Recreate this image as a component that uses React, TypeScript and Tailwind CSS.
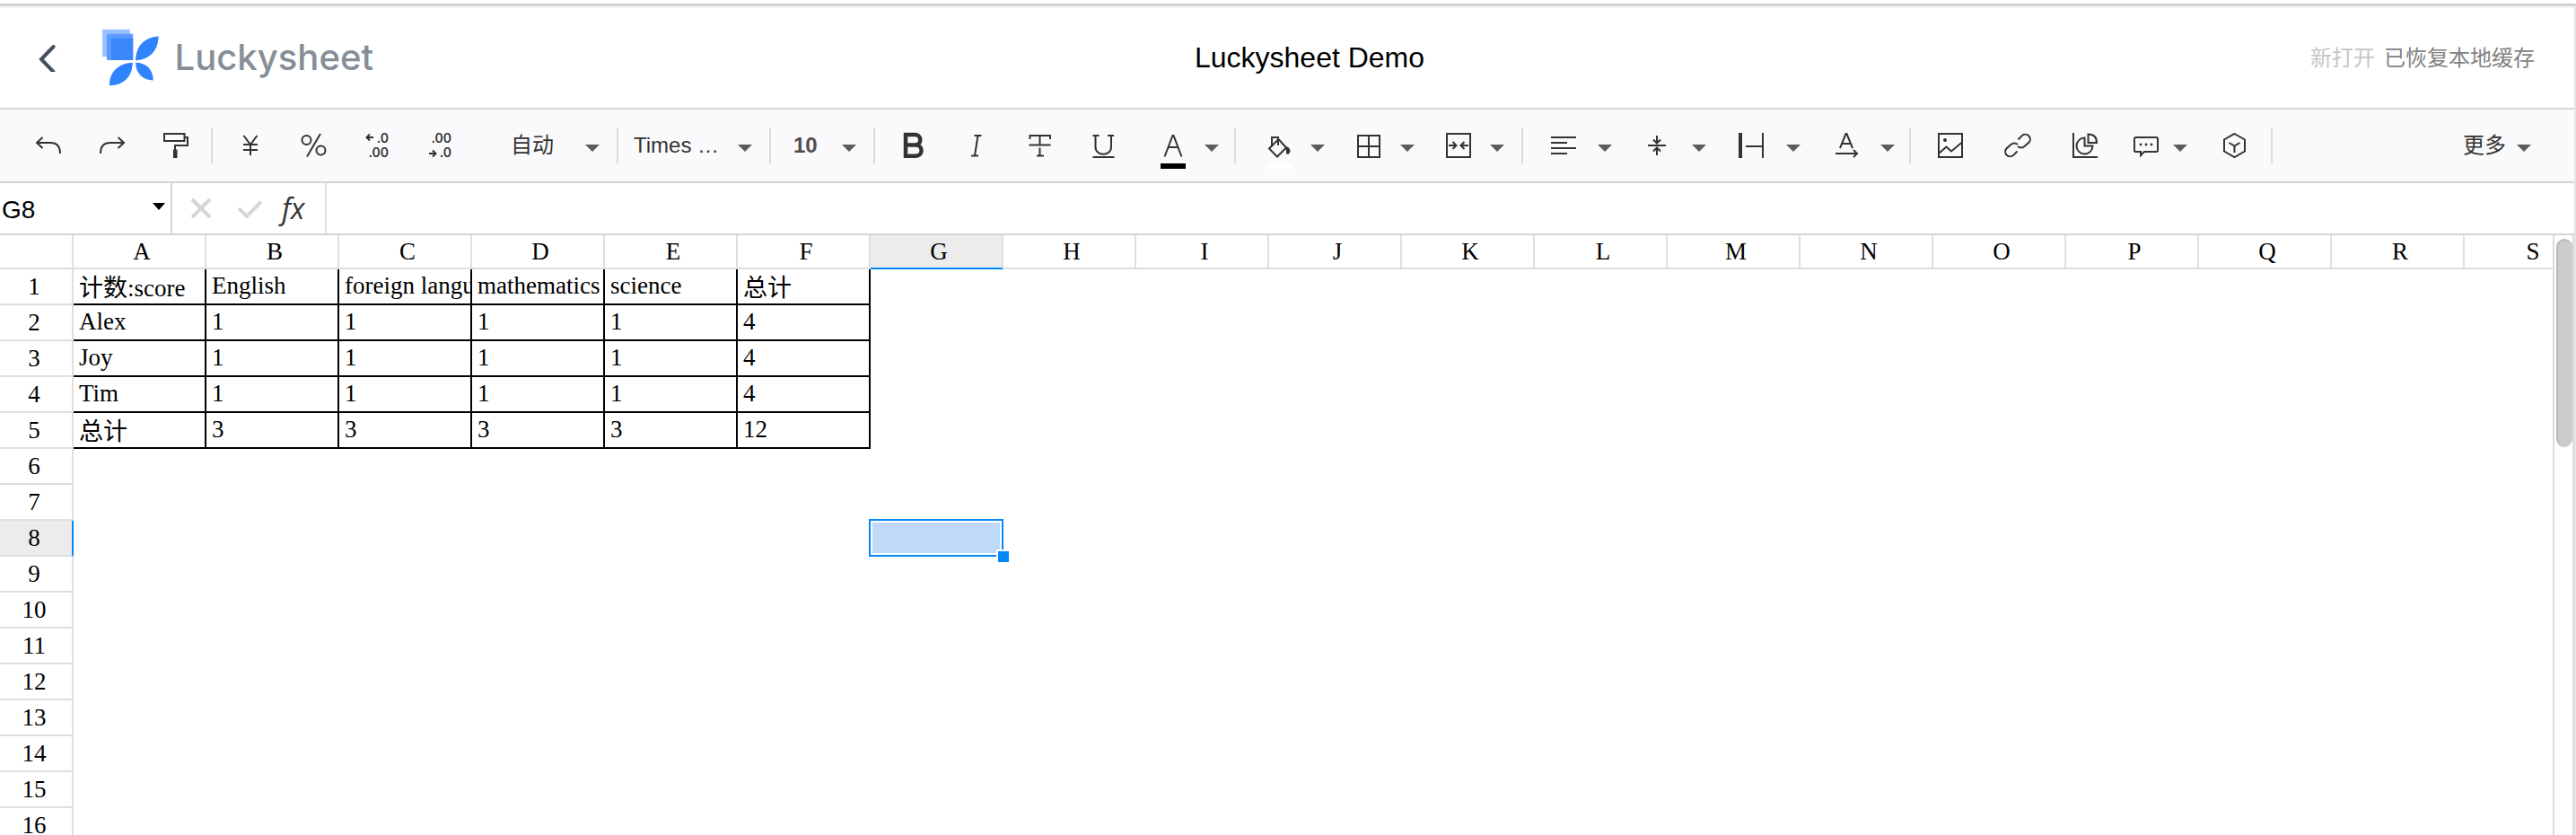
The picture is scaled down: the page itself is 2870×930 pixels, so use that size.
import type { ReactNode } from "react";
import clsx from "clsx";

const columns = "ABCDEFGHIJKLMNOPQRS".split("");
const rowCount = 16;
const active = { col: "G", row: 8 };

const cells = [
  ["计数:score", "English", "foreign language", "mathematics", "science", "总计"],
  ["Alex", "1", "1", "1", "1", "4"],
  ["Joy", "1", "1", "1", "1", "4"],
  ["Tim", "1", "1", "1", "1", "4"],
  ["总计", "3", "3", "3", "3", "12"],
];

const hasHan = (text: string) => /[\u4e00-\u9fff]/.test(text);

const Icon = ({ children, width = 2 }: { children: ReactNode; width?: number }) => (
  <svg
    viewBox="0 0 28 28"
    className="size-7 shrink-0 overflow-visible"
    fill="none"
    stroke="#333"
    strokeWidth={width}
    aria-hidden="true"
  >
    {children}
  </svg>
);

const Caret = () => (
  <svg viewBox="0 0 16 14" className="h-3.5 w-4 shrink-0 pointer-events-none" aria-hidden="true">
    <path d="M0 6h16l-8 8z" fill="#5c5c5c" />
  </svg>
);

const Separator = () => <span className="ml-1 mr-1.5 h-10 w-0.5 shrink-0 bg-[#dcdcdc]" />;

type ToolProps = { label: string; className?: string; children: ReactNode };

const Tool = ({ label, className = "w-[71px]", children }: ToolProps) => (
  <button
    type="button"
    aria-label={label}
    className={clsx("flex h-full shrink-0 items-center justify-center", className)}
  >
    {children}
  </button>
);

// icon with a drop-down arrow beside it
const SplitTool = ({ label, className = "w-[100px] pl-7 gap-[21px]", children }: ToolProps) => (
  <button type="button" aria-label={label} className={clsx("flex h-full shrink-0 items-center", className)}>
    {children}
    <Caret />
  </button>
);

const SelectTool = ({ label, value, className }: { label: string; value: string; className: string }) => (
  <label className={clsx("flex h-full shrink-0 items-center pr-[15px]", className)}>
    <select aria-label={label} className="min-w-0 flex-1 appearance-none bg-transparent outline-none">
      <option>{value}</option>
    </select>
    <Caret />
  </label>
);

const Logo = () => (
  <svg viewBox="0 0 64 64" className="size-16" aria-hidden="true">
    <path d="M0 0h31.500v31H0z" fill="#9ac1ff" />
    <path d="M5 5h30v30H5z" fill="#5e9dff" />
    <path d="M10 10h25v25H10z" fill="#3a87fc" />
    <g fill="#2f83ff">
      <path d="M38 35.500C38 19 48 9 64 8c0 16-10 26.500-26 27.500z" />
      <path d="M34.500 38C19 38.500 8 48 8 64c16 0 26.500-10 26.500-26z" />
      <path d="M38 38c12 0 20 8 20 20-12 0-20-8-20-20z" />
    </g>
  </svg>
);

const Header = () => (
  <header className="flex h-28 shrink-0 items-center">
    <div className="flex w-[416px] shrink-0 items-center pl-10">
      <a href="#back" aria-label="Back" className="mr-12 flex">
        <svg viewBox="0 0 26 32" className="h-8 w-[26px]" fill="none" aria-hidden="true">
          <path d="M19.500 4 6 18l13.500 14" stroke="#454f5f" strokeWidth="4" strokeLinecap="round" />
        </svg>
      </a>
      <Logo />
      <span className="ml-[18px] font-[Inter,sans-serif] text-[40px] font-medium text-[#868e98]">Luckysheet</span>
    </div>
    <input
      aria-label="Sheet name"
      defaultValue="Luckysheet Demo"
      className="min-w-0 flex-1 bg-transparent text-center text-[32px] text-black outline-none"
    />
    <div className="flex w-[366px] shrink-0 justify-end gap-2.5 pt-0.5 pr-11 text-2xl">
      <span className="text-[#c6c6c6]">新打开</span>
      <span className="text-[#828282]">已恢复本地缓存</span>
    </div>
  </header>
);

const Toolbar = () => (
  <div
    role="toolbar"
    aria-label="Toolbar"
    className="flex h-[84px] shrink-0 items-center border-y-2 border-[#d4d4d4] bg-[#fafafc] pl-[18px] text-2xl text-[#333]"
  >
    <Tool label="Undo">
      <Icon><path d="M7.500 5 1 11l6.500 6M1 11h15c7 0 11 4 11 12" /></Icon>
    </Tool>
    <Tool label="Redo">
      <Icon><path d="m20.500 5 6.500 6-6.500 6M27 11H12C5 11 1 15 1 23" /></Icon>
    </Tool>
    <Tool label="Paint format">
      <Icon>
        <path d="M1 1h22.500v8H1zM23.500 5H27v9H13v5" />
        <path d="M11 18.500h4.500V28H11z" fill="#333" stroke="none" />
      </Icon>
    </Tool>
    <Separator />

    <Tool label="Currency">
      <Icon><path d="m6.500 3 7.500 10 7.500-10M14 13v12M6 13h16M6 19h16" /></Icon>
    </Tool>
    <Tool label="Percent">
      <Icon>
        <circle cx="5.500" cy="8" r="5" />
        <circle cx="21.500" cy="19.500" r="5" />
        <path d="M21 1 6 26.500" />
      </Icon>
    </Tool>
    <Tool label="Decrease decimals">
      <Icon>
        <path d="M9 5H2M5 1.500 1.500 5 5 8.500" />
        <g className="font-[Inter,sans-serif] text-sm font-semibold" fill="#333" stroke="none" textAnchor="end">
          <text x="26" y="11">.0</text>
          <text x="26" y="27">.00</text>
        </g>
      </Icon>
    </Tool>
    <Tool label="Increase decimals">
      <Icon>
        <path d="M0 23h7M4 19.500 7.500 23 4 26.500" />
        <g className="font-[Inter,sans-serif] text-sm font-semibold" fill="#333" stroke="none" textAnchor="end">
          <text x="25" y="11">.00</text>
          <text x="25" y="27">.0</text>
        </g>
      </Icon>
    </Tool>
    <SelectTool label="Number format" value="自动" className="w-[156px] pl-[42px]" />
    <Separator />

    <SelectTool label="Font" value="Times …" className="w-[158px] pl-[11px]" />
    <Separator />

    <SelectTool label="Font size" value="10" className="w-[104px] pl-[19px] font-bold text-[#4f4f4f]" />
    <Separator />

    <Tool label="Bold">
      <Icon width={4.5}><path d="M6 2h10.500a5.500 5.500 0 0 1 0 11.500H6zM6 13.500h11.500a6 6 0 0 1 0 12.200H6z" /></Icon>
    </Tool>
    <Tool label="Italic">
      <Icon><path d="M11.500 3h8M8 25.500h8M15.500 3 12 25.500" /></Icon>
    </Tool>
    <Tool label="Strikethrough">
      <Icon><path d="M2.500 7V3H25v4M1.500 13.500h24M13.500 3v10M13.500 16.500V25M10 25.500h8" /></Icon>
    </Tool>
    <Tool label="Underline">
      <Icon><path d="M1.500 3h7M18 3h7M4.500 3v12.500c0 11 17.500 11 17.500 0V3M1.500 27h24" /></Icon>
    </Tool>
    <SplitTool label="Text color" className="w-[106px] pl-7 gap-[21px]">
      <Icon>
        <path d="M4.500 26.500 13.500 3h1l9 23.500M8 16h12" />
        <path d="M0 34h28v6H0z" fill="#000" stroke="none" />
      </Icon>
    </SplitTool>
    <Separator />

    <div className="flex h-full pr-2">
      <SplitTool label="Fill color">
        <Icon>
          <path d="M13.500 7 3 17.500l9 9L22 16.500zM6 14V5h7v9" />
          <path d="M20 15c4 0 6.500 2 6.500 5.500L25 23.500h-3v-4z" fill="#333" stroke="none" />
          <path d="M0 34h28v6H0z" fill="#fff" stroke="none" />
        </Icon>
      </SplitTool>
      <SplitTool label="Borders">
        <Icon><path d="M2 3h24v24H2zM14 3v24M2 15h24" /></Icon>
      </SplitTool>
      <SplitTool label="Merge cells">
        <Icon><path d="M1 1h26v26H1zM3 14h8M7.500 10l4 4-4 4M25 14h-8M20.500 10l-4 4 4 4" /></Icon>
      </SplitTool>
    </div>
    <Separator />

    <SplitTool label="Horizontal align" className="w-[105px] pl-[25px] gap-6">
      <Icon><path d="M0 5h28M0 11h18M0 17h28M0 23h18" /></Icon>
    </SplitTool>
    <SplitTool label="Vertical align" className="w-[105px] pl-[25px] gap-6">
      <Icon><path d="M3 14h20M13 3v8M9 7.500l4 4 4-4M13 25v-8M9 20.500l4-4 4 4" /></Icon>
    </SplitTool>
    <SplitTool label="Text overflow" className="w-[105px] pl-[25px] gap-6">
      <Icon>
        <path d="M7 15h19M26 0v28" />
        <path d="M-1 0h4v28h-4z" fill="#333" stroke="none" />
      </Icon>
    </SplitTool>
    <SplitTool label="Text rotation" className="w-[105px] pl-[25px] gap-6">
      <Icon><path d="M7 17 13.500 1h1L21 17M9 12h10M2 23h24M22 19l4 4-4 4" /></Icon>
    </SplitTool>
    <Separator />

    <Tool label="Insert image" className="w-[75px]">
      <Icon>
        <path d="M1 1h26v26H1zM1.500 22.500 9.500 15.500l5.500 5 12-10" />
        <circle cx="8" cy="8" r="2" fill="#333" stroke="none" />
      </Icon>
    </Tool>
    <Tool label="Insert link" className="w-[75px]">
      <Icon>
        <path d="M14.500 7.500 19 2.900a5.400 5.400 0 0 1 7.600 7.600l-5 4.400a5.400 5.400 0 0 1-7.600 0" />
        <path d="M13.500 20.500 9 25.100a5.400 5.400 0 0 1-7.600-7.600l5-4.400a5.400 5.400 0 0 1 7.600 0" />
      </Icon>
    </Tool>
    <Tool label="Insert chart" className="w-[75px]">
      <Icon><path d="M1 0v27h27M13.500 5.500a9 9 0 1 0 9 9h-9zM17.500 1.500V11H27c0-6-3.500-9.500-9.500-9.500z" /></Icon>
    </Tool>
    <SplitTool label="Comment" className="w-[92px] pl-[17px] gap-4">
      <Icon>
        <path d="M2.500 5h23A1.500 1.500 0 0 1 27 6.500v13a1.500 1.500 0 0 1-1.500 1.500H12l-4 4v-4H2.500A1.500 1.500 0 0 1 1 19.500v-13A1.500 1.500 0 0 1 2.500 5z" />
        <g fill="#333" stroke="none">
          <circle cx="8" cy="13" r="1.400" />
          <circle cx="14" cy="13" r="1.400" />
          <circle cx="20" cy="13" r="1.400" />
        </g>
      </Icon>
    </SplitTool>
    <Tool label="Pivot table" className="w-[74px]">
      <Icon><path d="M14.500 1 26 7.500v13L14.500 27 3 20.500v-13zM8.500 11l6 3.500 6-3.500M14.500 14.500V22" /></Icon>
    </Tool>
    <Separator />

    <button type="button" className="mr-12 ml-auto flex h-full items-center gap-3">
      更多
      <Caret />
    </button>
  </div>
);

const FormulaBar = () => (
  <div className="flex h-[58px] shrink-0 items-stretch border-b-2 border-[#d4d4d4]">
    <div className="flex w-48 shrink-0 items-center border-r-2 border-[#d4d4d4] pr-1.5">
      <input
        aria-label="Name box"
        defaultValue="G8"
        className="min-w-0 flex-1 bg-transparent pt-1 pl-0.5 text-[28px] text-black outline-none"
      />
      <button type="button" aria-label="Defined names">
        <svg viewBox="0 0 14 12" className="h-3 w-3.5" aria-hidden="true">
          <path d="M0 0h14L7 8z" />
        </svg>
      </button>
    </div>
    <div className="flex w-[172px] shrink-0 items-center border-r-2 border-[#dfdfdf] pl-[18px]">
      <button type="button" aria-label="Cancel" className="w-14">
        <Icon width={4}><path d="m4 4 20 20M24 4 4 24" stroke="#d6d6d6" /></Icon>
      </button>
      <button type="button" aria-label="Confirm" className="w-12">
        <Icon width={4}><path d="m0 14 9 9L25 6.500" stroke="#d6d6d6" /></Icon>
      </button>
      <button
        type="button"
        aria-label="Insert function"
        className="font-['Open_Sans',sans-serif] text-[32px] leading-8 font-medium italic text-[#333]"
      >
        fx
      </button>
    </div>
    <input aria-label="Formula" className="min-w-0 flex-1 bg-transparent px-2 text-[28px] outline-none" />
  </div>
);

const Selection = () => (
  <div className="absolute -top-0.5 -left-0.5 right-0 bottom-0 border-2 border-[#0188fb] p-0.5">
    <div className="h-full bg-[#bfd9f8]" />
    <div className="absolute -right-2 -bottom-2 size-3.5 border-t-2 border-l-2 border-white bg-[#0188fb]" />
  </div>
);

const Grid = () => (
  <div className="min-w-0 flex-1 overflow-hidden">
    <table className="w-max table-fixed border-separate border-spacing-0 font-['Liberation_Serif','Noto_Sans_CJK_SC',serif] text-[27px] text-black">
      <thead>
        <tr className="h-[38px]">
          <th aria-label="Select all" className="w-[82px] min-w-[82px] border-r-2 border-b-2 border-[#dfdfdf] p-0" />
          {columns.map((col) => (
            <th
              key={col}
              scope="col"
              className={clsx(
                "w-[148px] min-w-[148px] border-r-2 border-b-2 border-r-[#dfdfdf] py-0 pr-0 pl-1.5 leading-9 font-normal",
                col === active.col ? "border-b-[#0188fb] bg-[#ececec]" : "border-b-[#dfdfdf]"
              )}
            >
              {col}
            </th>
          ))}
        </tr>
      </thead>
      <tbody>
        {Array.from({ length: rowCount }, (_, i) => i + 1).map((row) => (
          <tr key={row} className="h-10">
            <th
              scope="row"
              className={clsx(
                "border-r-2 border-b-2 border-b-[#dfdfdf] py-0 pr-1 pl-0 leading-[38px] font-normal",
                row === active.row ? "border-r-[#0188fb] bg-[#ececec]" : "border-r-[#dfdfdf]"
              )}
            >
              {row}
            </th>
            {columns.map((col, c) => {
              const text = cells[row - 1]?.[c];
              if (text === undefined) {
                return (
                  <td key={col} className="relative p-0">
                    {col === active.col && row === active.row && <Selection />}
                  </td>
                );
              }
              return (
                <td key={col} className="border-r-2 border-b-2 border-black p-0 align-top">
                  <div
                    className={clsx(
                      "h-[38px] w-[146px] overflow-hidden pl-1.5 whitespace-nowrap",
                      hasHan(text) ? "pt-1 leading-[34px]" : "leading-9"
                    )}
                  >
                    {text}
                  </div>
                </td>
              );
            })}
          </tr>
        ))}
      </tbody>
    </table>
  </div>
);

const App = () => (
  <div className="flex h-screen flex-col overflow-hidden bg-white pt-1 font-['Liberation_Sans','Noto_Sans_CJK_SC',sans-serif]">
    <div className="h-1 shrink-0 border-t-2 border-[#ccc] bg-[#e6e6e6]" />
    <main className="flex min-h-0 flex-1 flex-col border-r-2 border-[#e6e6e6]">
      <Header />
      <Toolbar />
      <FormulaBar />
      <div className="flex min-h-0 flex-1">
        <Grid />
        <div className="w-6 shrink-0 border-x-2 border-[#dcdcdc] pt-1 pl-0.5">
          <div className="h-[232px] w-[18px] rounded-full border-t-2 border-l-2 border-[#b8b8b8] bg-[#cbcbcb]" />
        </div>
      </div>
    </main>
  </div>
);

export default App;
